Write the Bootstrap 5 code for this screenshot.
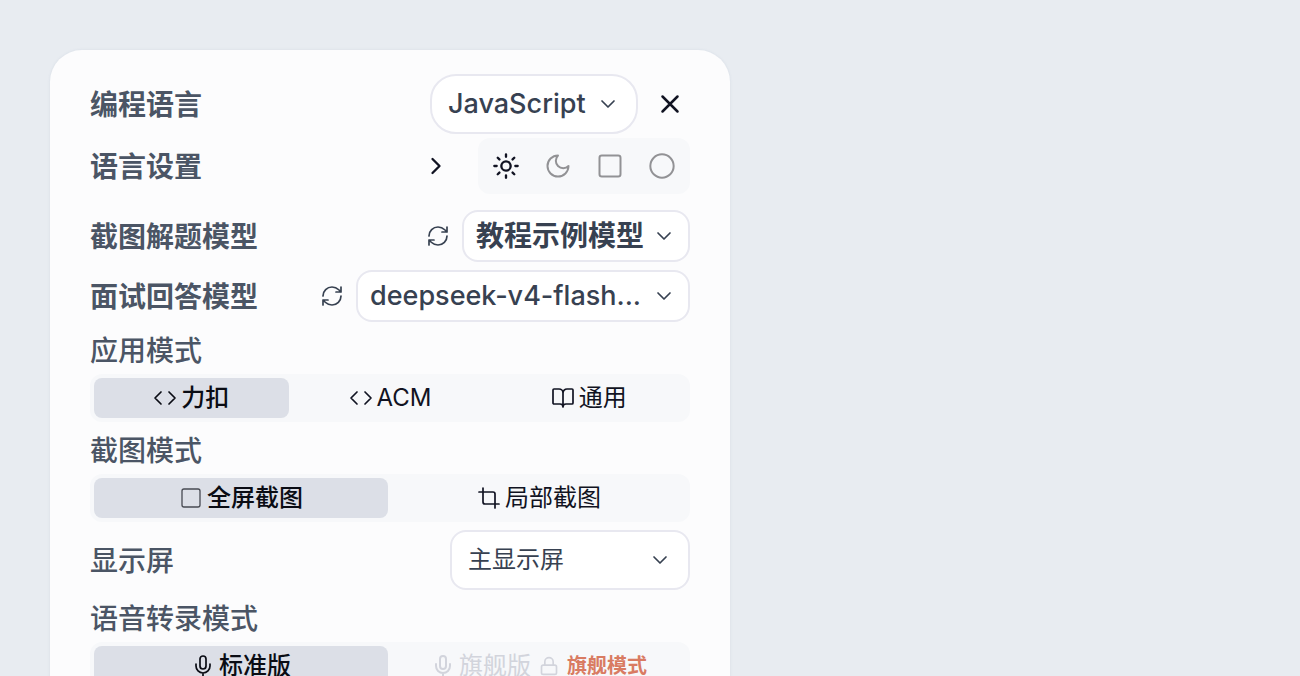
<!DOCTYPE html>
<html lang="zh-CN">
<head>
<meta charset="utf-8">
<meta name="viewport" content="width=device-width, initial-scale=1">
<title>设置</title>
<link href="https://cdn.jsdelivr.net/npm/bootstrap@5.3.0/dist/css/bootstrap.min.css" rel="stylesheet">
<style>
  body {
    background: #e8ecf1;
    font-family: Inter, "Noto Sans CJK SC", sans-serif;
    color: #111322;
  }
  .stage { padding: 50px; }
  .panel {
    max-width: 680px;
    padding: 24px 40px;
    background: #fcfcfd;
    border-radius: 32px;
    box-shadow: 0 0 3px rgba(100, 120, 160, .12);
  }
  svg { fill: none; stroke: currentColor; stroke-width: 2; stroke-linecap: round; stroke-linejoin: round; flex: none; display: block; }
  .i-sm { width: 20px; height: 20px; }
  .i-md { width: 24px; height: 24px; }
  .i-lg { width: 28px; height: 28px; }
  .i-xl { width: 30px; height: 30px; }
  .thin { stroke-width: 1.7; }
  .hairline { stroke-width: 1.3; opacity: .7; }

  .field-title { font-size: 28px; line-height: 38px; padding-top: 2px; font-weight: 500; color: #4b5565; margin: 0; white-space: nowrap; }
  .field-title.strong { font-weight: 700; }
  .btn-plain { padding: 0; border: 0; color: inherit; display: flex; align-items: center; justify-content: center; }
  .btn-close-panel { width: 40px; height: 40px; margin-left: 12px; }
  .btn-more { width: 52px; height: 48px; }
  .btn-refresh { width: 24px; height: 24px; margin-right: 12px; color: #374151; }

  .picker {
    color: #374151;
    background-color: #fff;
    background-image: url("data:image/svg+xml,%3Csvg xmlns='http://www.w3.org/2000/svg' viewBox='0 0 24 24' fill='none' stroke='%23374151' stroke-width='1.7' stroke-linecap='round' stroke-linejoin='round'%3E%3Cpath d='m6 9 6 6 6-6'/%3E%3C/svg%3E");
    background-size: 24px 24px;
    background-position: right 12px center;
    border: 2px solid #e8e8f0;
    border-radius: 16px;
    height: 52px;
    padding: 0 36px 0 12px;
    font-size: 27px;
    line-height: 40px;
    font-weight: 500;
  }
  .picker-tall { height: 60px; padding-left: 16px; background-position: right 16px center; }
  .picker-lang { width: 208px; border-radius: 26px; }
  .picker-shot { width: 228px; font-size: 28px; font-weight: 700; }
  .picker-chat { width: 334px; }
  .picker-screen { width: 240px; font-size: 24px; font-weight: 400; }

  .well { background: #f7f8fa; border-radius: 12px; padding: 4px; gap: 4px; }
  .theme-opt { width: 48px; height: 48px; color: #929295; cursor: pointer; }
  .btn-check:checked + .theme-opt { color: #111322; }
  .seg { flex: 1 1 0; min-width: 0; height: 40px; gap: 4px; font-size: 24px; line-height: 40px; border-radius: 8px; white-space: nowrap; cursor: pointer; }
  .btn-check:checked + .seg { background: #dcdfe7; color: #0a0c14; font-weight: 500; }
  .btn-check:disabled + .seg { color: #d2d4dc; cursor: default; }
  .tier { font-size: 20px; font-weight: 700; color: #d97b62; margin-left: 4px; }
  .lock { margin-left: 4px; }
</style>
</head>
<body>
<main class="stage vh-100 overflow-hidden">
  <form class="panel">
    <div class="d-flex align-items-center mb-1">
      <label class="field-title strong me-auto" for="lang">编程语言</label>
      <select class="form-select picker picker-tall picker-lang" id="lang"><option>JavaScript</option></select>
      <button type="button" class="btn btn-plain btn-close-panel" aria-label="关闭">
        <svg class="i-xl" viewBox="0 0 24 24"><path d="M18 6 6 18M6 6l12 12"/></svg>
      </button>
    </div>

    <div class="d-flex align-items-center mb-3">
      <h2 class="field-title strong me-auto">语言设置</h2>
      <button type="button" class="btn btn-plain btn-more me-3" aria-label="展开">
        <svg class="i-lg" viewBox="0 0 24 24"><path d="m9 18 6-6-6-6"/></svg>
      </button>
      <div class="well d-flex" role="radiogroup" aria-label="主题">
        <input type="radio" class="btn-check" name="theme" id="t1" checked>
        <label class="theme-opt d-flex align-items-center justify-content-center" for="t1" aria-label="浅色">
          <svg class="i-lg" viewBox="0 0 24 24"><circle cx="12" cy="12" r="4"/><path d="M12 2v2M12 20v2M4.93 4.93l1.41 1.41M17.66 17.66l1.41 1.41M2 12h2M20 12h2M6.34 17.66l-1.41 1.41M19.07 4.93l-1.41 1.41"/></svg>
        </label>
        <input type="radio" class="btn-check" name="theme" id="t2">
        <label class="theme-opt d-flex align-items-center justify-content-center" for="t2" aria-label="深色">
          <svg class="i-lg thin" viewBox="0 0 24 24"><path d="M12 3a6 6 0 0 0 9 9 9 9 0 1 1-9-9Z"/></svg>
        </label>
        <input type="radio" class="btn-check" name="theme" id="t3">
        <label class="theme-opt d-flex align-items-center justify-content-center" for="t3" aria-label="方形">
          <svg class="i-lg thin" viewBox="0 0 24 24"><rect x="3" y="3" width="18" height="18" rx="2"/></svg>
        </label>
        <input type="radio" class="btn-check" name="theme" id="t4">
        <label class="theme-opt d-flex align-items-center justify-content-center" for="t4" aria-label="圆形">
          <svg class="i-lg thin" viewBox="0 0 24 24"><circle cx="12" cy="12" r="10"/></svg>
        </label>
      </div>
    </div>

    <div class="d-flex align-items-center mb-2">
      <label class="field-title strong me-auto" for="shot">截图解题模型</label>
      <button type="button" class="btn btn-plain btn-refresh" aria-label="刷新">
        <svg class="i-md thin" viewBox="0 0 24 24"><path d="M3 12a9 9 0 0 1 9-9 9.75 9.75 0 0 1 6.74 2.74L21 8M21 3v5h-5M21 12a9 9 0 0 1-9 9 9.75 9.75 0 0 1-6.74-2.74L3 16M8 16H3v5"/></svg>
      </button>
      <select class="form-select picker picker-shot" id="shot"><option>教程示例模型</option></select>
    </div>

    <div class="d-flex align-items-center mb-2">
      <label class="field-title strong me-auto" for="chat">面试回答模型</label>
      <button type="button" class="btn btn-plain btn-refresh" aria-label="刷新">
        <svg class="i-md thin" viewBox="0 0 24 24"><path d="M3 12a9 9 0 0 1 9-9 9.75 9.75 0 0 1 6.74 2.74L21 8M21 3v5h-5M21 12a9 9 0 0 1-9 9 9.75 9.75 0 0 1-6.74-2.74L3 16M8 16H3v5"/></svg>
      </button>
      <select class="form-select picker picker-chat" id="chat"><option>deepseek-v4-flash...</option></select>
    </div>

    <h2 class="field-title mb-1" id="app-mode">应用模式</h2>
    <div class="well d-flex mb-2" role="radiogroup" aria-labelledby="app-mode">
      <input type="radio" class="btn-check" name="app" id="a1" checked>
      <label class="seg d-flex align-items-center justify-content-center" for="a1"><svg class="i-md thin" viewBox="0 0 24 24"><path d="m16 18 6-6-6-6M8 6l-6 6 6 6"/></svg>力扣</label>
      <input type="radio" class="btn-check" name="app" id="a2">
      <label class="seg d-flex align-items-center justify-content-center" for="a2"><svg class="i-md thin" viewBox="0 0 24 24"><path d="m16 18 6-6-6-6M8 6l-6 6 6 6"/></svg>ACM</label>
      <input type="radio" class="btn-check" name="app" id="a3">
      <label class="seg d-flex align-items-center justify-content-center" for="a3"><svg class="i-md thin" viewBox="0 0 24 24"><path d="M12 7v14M3 18a1 1 0 0 1-1-1V4a1 1 0 0 1 1-1h5a4 4 0 0 1 4 4 4 4 0 0 1 4-4h5a1 1 0 0 1 1 1v13a1 1 0 0 1-1 1h-6a3 3 0 0 0-3 3 3 3 0 0 0-3-3z"/></svg>通用</label>
    </div>

    <h2 class="field-title mb-1" id="shot-mode">截图模式</h2>
    <div class="well d-flex mb-2" role="radiogroup" aria-labelledby="shot-mode">
      <input type="radio" class="btn-check" name="cap" id="c1" checked>
      <label class="seg d-flex align-items-center justify-content-center" for="c1"><svg class="i-md hairline" viewBox="0 0 24 24"><rect x="3" y="3" width="18" height="18" rx="2"/></svg>全屏截图</label>
      <input type="radio" class="btn-check" name="cap" id="c2">
      <label class="seg d-flex align-items-center justify-content-center" for="c2"><svg class="i-md thin" viewBox="0 0 24 24"><path d="M6 2v14a2 2 0 0 0 2 2h14M18 22V8a2 2 0 0 0-2-2H2"/></svg>局部截图</label>
    </div>

    <div class="d-flex align-items-center mb-2">
      <label class="field-title me-auto" for="screen">显示屏</label>
      <select class="form-select picker picker-tall picker-screen" id="screen"><option>主显示屏</option></select>
    </div>

    <h2 class="field-title mb-1" id="voice-mode">语音转录模式</h2>
    <div class="well d-flex" role="radiogroup" aria-labelledby="voice-mode">
      <input type="radio" class="btn-check" name="voice" id="v1" checked>
      <label class="seg d-flex align-items-center justify-content-center" for="v1"><svg class="i-md thin" viewBox="0 0 24 24"><path d="M12 19v3M19 10v2a7 7 0 0 1-14 0v-2"/><rect x="9" y="2" width="6" height="13" rx="3"/></svg>标准版</label>
      <input type="radio" class="btn-check" name="voice" id="v2" disabled>
      <label class="seg d-flex align-items-center justify-content-center" for="v2"><svg class="i-md" viewBox="0 0 24 24"><path d="M12 19v3M19 10v2a7 7 0 0 1-14 0v-2"/><rect x="9" y="2" width="6" height="13" rx="3"/></svg>旗舰版<svg class="i-sm lock" viewBox="0 0 24 24"><rect x="3" y="11" width="18" height="11" rx="2"/><path d="M7 11V7a5 5 0 0 1 10 0v4"/></svg><span class="tier">旗舰模式</span></label>
    </div>
  </form>
</main>
<script src="https://cdn.jsdelivr.net/npm/bootstrap@5.3.0/dist/js/bootstrap.bundle.min.js"></script>
</body>
</html>
